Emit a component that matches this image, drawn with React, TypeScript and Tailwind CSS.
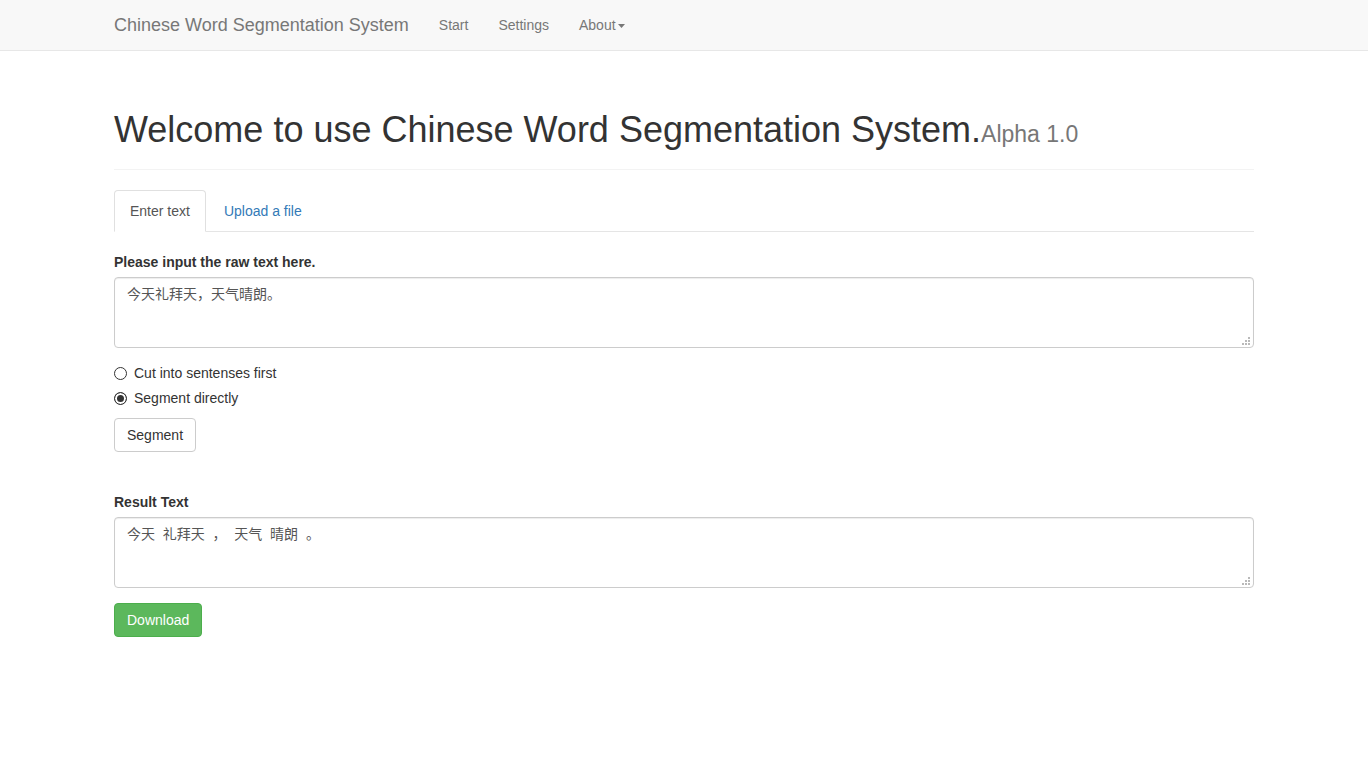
import { useState } from "react";

const areaClass =
  "block h-[71px] w-full resize-none rounded border border-[#ccc] bg-white px-3 py-1.5 text-sm leading-5 text-[#555] shadow-[inset_0_1px_1px_rgba(0,0,0,0.075)] outline-none focus:border-[#66afe9]";

function Grip() {
  return (
    <svg
      className="pointer-events-none absolute right-[3px] bottom-[3px]"
      width="9"
      height="8"
      viewBox="0 0 9 8"
      fill="#b9b9b9"
      shapeRendering="crispEdges"
      aria-hidden="true"
    >
      <path d="M6 0h2v2h-2zM3 3h2v2h-2zM6 3h2v2h-2zM0 6h2v2h-2zM3 6h2v2h-2zM6 6h2v2h-2z" />
    </svg>
  );
}

function TextPanel({ id, label, initial }: { id: string; label: string; initial: string }) {
  return (
    <div className="mb-[15px]">
      <label htmlFor={id} className="mb-[5px] block font-bold">
        {label}
      </label>
      <div className="relative">
        <textarea id={id} className={areaClass} defaultValue={initial} />
        <Grip />
      </div>
    </div>
  );
}

const radioClass =
  "size-[13px] appearance-none rounded-full border border-[#333] bg-white checked:bg-[#333] checked:shadow-[inset_0_0_0_2px_#fff]";

export default function App() {
  const [mode, setMode] = useState("direct");
  return (
    <div className="bg-white font-['Liberation_Sans','Noto_Sans_CJK_SC',sans-serif] text-sm leading-5 text-[#333]">
      <nav className="border-b border-[#e7e7e7] bg-[#f8f8f8]">
        <div className="mx-auto flex h-[50px] max-w-[1170px] items-center px-[15px] text-[#777]">
          <a href="#" className="mr-[15px] text-lg leading-5">
            Chinese Word Segmentation System
          </a>
          <a href="#start" className="px-[15px]">Start</a>
          <a href="#settings" className="px-[15px]">Settings</a>
          <a href="#about" className="flex items-center gap-[2px] px-[15px]">
            About
            <svg className="mt-0.5" width="7" height="4" viewBox="0 0 7 4" fill="#777" aria-hidden="true">
              <path d="M0 0h7L3.5 4z" />
            </svg>
          </a>
        </div>
      </nav>
      <main className="mx-auto max-w-[1170px] px-[15px] pt-[59px]">
        <header className="mb-5 border-b border-[#f3f3f3] pb-[19px]">
          <h1 className="text-4xl leading-10 font-medium">
            Welcome to use Chinese Word Segmentation System.
            <small className="text-[23px] leading-6 font-normal text-[#777]">Alpha 1.0</small>
          </h1>
        </header>
        <div className="mb-5 flex gap-0.5 border-b border-[#e5e5e5]">
          <a
            href="#text"
            className="-mb-px rounded-t border border-[#e0e0e0] border-b-white bg-white px-[15px] py-2.5 text-[#555]"
          >
            Enter text
          </a>
          <a href="#upload" className="-mb-px border border-transparent px-[15px] py-2.5 text-[#337ab7]">
            Upload a file
          </a>
        </div>
        <form onSubmit={(e) => e.preventDefault()}>
          <TextPanel id="raw" label="Please input the raw text here." initial="今天礼拜天，天气晴朗。" />
          <div className="mb-2.5 flex flex-col items-start gap-[5px]">
            <label className="flex items-center gap-[7px]">
              <input
                type="radio"
                name="mode"
                className={radioClass}
                checked={mode === "sentences"}
                onChange={() => setMode("sentences")}
              />
              Cut into sentenses first
            </label>
            <label className="flex items-center gap-[7px]">
              <input
                type="radio"
                name="mode"
                className={radioClass}
                checked={mode === "direct"}
                onChange={() => setMode("direct")}
              />
              Segment directly
            </label>
          </div>
          <button type="submit" className="rounded border border-[#ccc] bg-white px-3 py-1.5 hover:bg-[#e6e6e6]">
            Segment
          </button>
        </form>
        <section className="pt-10">
          <TextPanel id="result" label="Result Text" initial="今天  礼拜天  ，  天气  晴朗  。" />
          <button
            type="button"
            className="rounded border border-[#4cae4c] bg-[#5cb85c] px-3 py-1.5 text-white hover:bg-[#449d44]"
          >
            Download
          </button>
        </section>
      </main>
    </div>
  );
}
